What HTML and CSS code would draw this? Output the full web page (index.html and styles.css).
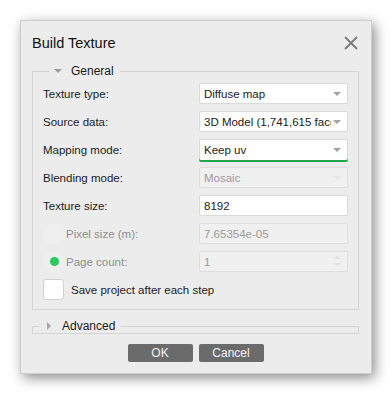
FILE: index.html
```html
<html>
<head>
	<link rel="stylesheet" href="styles.css">
</head>
<body>
	<div class="dialog">
		<div class="title-bar">
			<span class="title">Build Texture</span>
			<svg class="close" width="14" height="14" viewBox="0 0 14 14"><path d="M1 1L13 13M13 1L1 13" stroke="#7b7b7b" stroke-width="1.8" fill="none"/></svg>
		</div>
		<fieldset class="group">
			<legend><span class="tri-down"></span>General</legend>
			<div class="row">
				<span class="label">Texture type:</span>
				<div class="combo"><span>Diffuse map</span><i class="arrow"></i></div>
			</div>
			<div class="row">
				<span class="label">Source data:</span>
				<div class="combo"><span class="clip">3D Model (1,741,615 faces)</span><i class="arrow"></i></div>
			</div>
			<div class="row">
				<span class="label">Mapping mode:</span>
				<div class="combo focus"><span>Keep uv</span><i class="arrow"></i></div>
			</div>
			<div class="row">
				<span class="label">Blending mode:</span>
				<div class="combo off"><span>Mosaic</span><i class="arrow"></i></div>
			</div>
			<div class="row">
				<span class="label">Texture size:</span>
				<div class="field"><span>8192</span></div>
			</div>
			<div class="row">
				<span class="label dim"><i class="radio"></i>Pixel size (m):</span>
				<div class="field off"><span>7.65354e-05</span></div>
			</div>
			<div class="row">
				<span class="label dim"><i class="radio on"></i>Page count:</span>
				<div class="field off"><span>1</span><i class="spin"></i></div>
			</div>
			<div class="row">
				<span class="label"><i class="check"></i>Save project after each step</span>
			</div>
		</fieldset>
		<fieldset class="group closed">
			<legend><span class="tri-right"></span>Advanced</legend>
		</fieldset>
		<div class="buttons">
			<button>OK</button>
			<button>Cancel</button>
		</div>
	</div>
</body>
</html>
```
FILE: styles.css
```css
body {margin:0;background:#fff;font-family:"Liberation Sans","DejaVu Sans",sans-serif;font-size:11.5px;color:#1b1b1b;}
.dialog {margin:20px 0 0 20px;width:352px;height:354px;box-sizing:border-box;background:#ececec;
	border:1px solid #cdcdcd;box-shadow:3px 4px 12px rgba(0,0,0,0.45);padding:0 12px 0 11px;
	display:flex;flex-direction:column;}
.title-bar {display:flex;align-items:center;justify-content:space-between;height:42px;padding-top:1px;}
.title {font-size:14.5px;color:#111;}
.close {margin-right:1px;}

.group {margin:0;border:1px solid #d4d4d4;padding:5px 10px 9px 10px;min-width:0;}
.group legend {padding:0 6px 0 5px;margin-left:6px;font-size:12px;display:flex;align-items:center;}
.tri-down {width:0;height:0;border-left:4px solid transparent;border-right:4px solid transparent;
	border-top:4px solid #9c9c9c;margin-right:9px;}
.tri-right {width:0;height:0;border-top:4px solid transparent;border-bottom:4px solid transparent;
	border-left:4px solid #a8a8a8;margin:0 11px 0 3px;}
.closed {margin-top:9px;padding:0;height:7px;}

.row {display:flex;align-items:center;justify-content:space-between;height:21px;margin-top:7px;}
.row:first-of-type {margin-top:0;}
.label {display:flex;align-items:center;}
.dim {color:#8f8f8f;}

.combo, .field {width:149px;height:21px;box-sizing:border-box;background:#fff;border:1px solid #dadada;
	border-radius:2px;display:flex;align-items:center;justify-content:space-between;padding:0 6px 0 4px;
	position:relative;}
.combo span, .field span {white-space:nowrap;}
.clip {width:127px;overflow:hidden;}
.arrow {width:0;height:0;border-left:4px solid transparent;border-right:4px solid transparent;
	border-top:4px solid #a3a3a3;}
.focus {border-bottom:none;box-shadow:0 2px 0 #22a84a;}
.off {background:#f0f0f0;color:#9a9a9a;border-color:#dedede;}
.off .arrow {border-top-color:#e4e4e4;}
.spin {width:0;height:0;border-left:4px solid transparent;border-right:4px solid transparent;
	border-bottom:3px solid #e0e0e0;position:relative;top:-4px;}
.spin:after {content:"";position:absolute;left:-4px;top:7px;border-left:4px solid transparent;
	border-right:4px solid transparent;border-top:3px solid #e0e0e0;}

.radio {width:22px;height:22px;border-radius:50%;background:#efefef;display:flex;
	align-items:center;justify-content:center;margin-right:1px;}
.radio.on:after {content:"";width:9px;height:9px;border-radius:50%;background:#2cc95c;}
.check {width:21px;height:21px;box-sizing:border-box;background:#fff;border:1px solid #d0d0d0;
	border-radius:3px;margin-right:7px;}

.buttons {display:flex;justify-content:center;gap:6px;margin-top:16px;}
.buttons button {width:65px;height:18px;background:#6b6b6b;border:none;border-radius:2px;color:#f4f4f4;
	font-family:"Liberation Sans",sans-serif;font-size:12px;padding:0;}
```
